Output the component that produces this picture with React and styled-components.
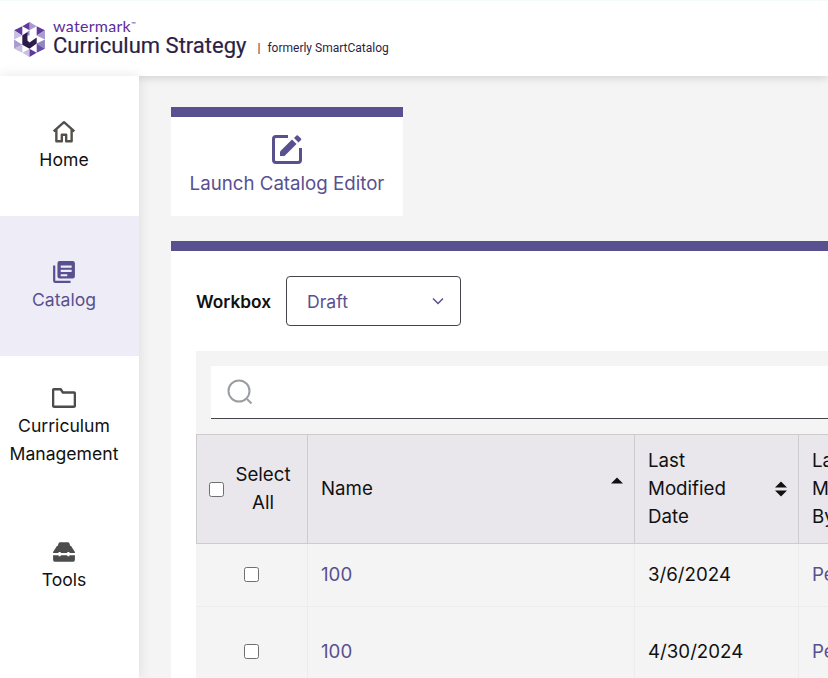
import React from "react";
import styled, { createGlobalStyle } from "styled-components";

const purple = "#58508f";

const rows = [
  { name: "100", date: "3/6/2024", by: "Peter" },
  { name: "100", date: "4/30/2024", by: "Peter" },
];

function Logo() {
  return (
    <svg width="33" height="37" viewBox="0 0 32 36">
      <polygon points="16,1 16,9 23,5" fill="#a99bd0" />
      <polygon points="9,5 16,1 16,9" fill="#5f3a9c" />
      <polygon points="23,5 31,9 23,14" fill="#5f3a9c" />
      <polygon points="1,9 9,5 9,14" fill="#5f3a9c" />
      <polygon points="1,9 9,14 1,18" fill="#c9bfe3" />
      <polygon points="23,14 31,9 31,18" fill="#a99bd0" />
      <polygon points="1,18 9,23 1,27" fill="#a99bd0" />
      <polygon points="31,18 31,27 23,22" fill="#8f86c4" />
      <polygon points="1,27 9,23 9,31" fill="#c9bfe3" />
      <polygon points="31,27 23,31 23,22" fill="#6a4ca8" />
      <polygon points="9,31 16,27 16,35" fill="#c9bfe3" />
      <polygon points="16,27 23,31 16,35" fill="#5f3a9c" />
      <polygon points="9,14 16,9 16,14" fill="#8f86c4" />
      <polygon points="9,14 14,11 14,19 16,21 23,16 23,22 16,27 9,23" fill="#2c1c4a" />
    </svg>
  );
}

function HomeIcon() {
  return (
    <svg width="24" height="24" viewBox="1 1 22 22" fill="none" stroke="#54504a" strokeWidth="2.200" strokeLinejoin="round">
      <path d="M2.500 11.500 12 3l9.500 8.500M5 9.500V20.500h5v-6h4v6h5V9.500" />
    </svg>
  );
}

function CatalogIcon() {
  return (
    <svg width="24" height="24" viewBox="1 1 22 22" fill={purple}>
      <path d="M2 6h2v14h14v2H4a2 2 0 0 1-2-2z" />
      <path d="M8 2h12a2 2 0 0 1 2 2v12a2 2 0 0 1-2 2H8a2 2 0 0 1-2-2V4a2 2 0 0 1 2-2zm1 4v2h10V6zm0 4v2h10v-2zm0 4v2h6v-2z" fillRule="evenodd" />
    </svg>
  );
}

function FolderIcon() {
  return (
    <svg width="24" height="24" viewBox="1 1 22 22" fill="none" stroke="#4c4c4c" strokeWidth="2.200" strokeLinejoin="round">
      <path d="M2 7V5a1 1 0 0 1 1-1h6l2 3h10a1 1 0 0 1 1 1v11a1 1 0 0 1-1 1H3a1 1 0 0 1-1-1z" />
    </svg>
  );
}

function ToolsIcon() {
  return (
    <svg width="24" height="24" viewBox="1 1 22 22" fill="#4c4c4c">
      <path d="M8.500 3h7a1.500 1.500 0 0 1 1.400 1L18 7H6l1.100-3A1.500 1.500 0 0 1 8.500 3z" />
      <path d="M5.500 6.500h13L22 12v1h-5v-1h-2v1H9v-1H7v1H2v-1z" />
      <path d="M2 15h5v1h2v-1h6v1h2v-1h5v4a2 2 0 0 1-2 2H4a2 2 0 0 1-2-2z" />
    </svg>
  );
}

function EditIcon() {
  return (
    <svg width="32" height="32" viewBox="0 0 32 32" fill="none">
      <path d="M17 3.500H5A2.500 2.500 0 0 0 2.500 6v21A2.500 2.500 0 0 0 5 29.500h22a2.500 2.500 0 0 0 2.500-2.500V15" stroke={purple} strokeWidth="3" />
      <path d="M9 23v-4.500L21 6.500l4.500 4.500L13.500 23z" fill={purple} />
      <path d="M23 5l2.500-2.500a1 1 0 0 1 1.400 0l3.100 3.100a1 1 0 0 1 0 1.400L27.500 9.500z" fill={purple} />
    </svg>
  );
}

function SearchIcon() {
  return (
    <svg width="26" height="26" viewBox="0 0 26 26" fill="none" stroke="#9a9ea3" strokeWidth="2">
      <circle cx="12" cy="12" r="10.500" />
      <path d="M20 20l4.500 4.500" />
    </svg>
  );
}

function Chevron() {
  return (
    <svg width="12" height="8" viewBox="0 0 12 8" fill="none" stroke={purple} strokeWidth="1.500">
      <path d="M1 1.500l5 5 5-5" />
    </svg>
  );
}

function SortIcon({ both }) {
  return (
    <svg width="12" height="18" viewBox="0 0 12 18" fill="#111">
      <path d="M6 1.500l6 6H0z" />
      {both && <path d="M6 16.500l6-6H0z" />}
    </svg>
  );
}

export default function App() {
  return (
    <>
      <GlobalStyle />
      <Page>
        <Header>
          <Logo />
          <Brand>
            <Watermark>
              watermark<Tm>™</Tm>
            </Watermark>
            <Product>Curriculum Strategy</Product>
          </Brand>
          <Formerly>
            <Pipe>|</Pipe>formerly SmartCatalog
          </Formerly>
        </Header>
        <Body>
          <Sidebar>
            <NavItem>
              <HomeIcon />
              <NavLabel>Home</NavLabel>
            </NavItem>
            <NavItem $active>
              <CatalogIcon />
              <NavLabel $active>Catalog</NavLabel>
            </NavItem>
            <NavItem>
              <FolderIcon />
              <NavLabel>
                Curriculum
                <br />
                Management
              </NavLabel>
            </NavItem>
            <NavItem>
              <ToolsIcon />
              <NavLabel>Tools</NavLabel>
            </NavItem>
          </Sidebar>
          <Main>
            <LaunchCard>
              <EditIcon />
              <LaunchLabel>Launch Catalog Editor</LaunchLabel>
            </LaunchCard>
            <Panel>
              <WorkboxRow>
                <WorkboxLabel>Workbox</WorkboxLabel>
                <Select>
                  Draft
                  <Chevron />
                </Select>
              </WorkboxRow>
              <TableArea>
                <SearchBar>
                  <SearchIcon />
                </SearchBar>
                <Table>
                  <HeadCell>
                    <Check />
                    <SelectAll>Select All</SelectAll>
                  </HeadCell>
                  <HeadCell $pad>
                    <span>Name</span>
                    <SortSlot>
                      <SortIcon />
                    </SortSlot>
                  </HeadCell>
                  <HeadCell $pad>
                    <HeadText>Last Modified Date</HeadText>
                    <SortSlot $both>
                      <SortIcon both />
                    </SortSlot>
                  </HeadCell>
                  <HeadCell $pad>
                    <HeadText>Last Modified By</HeadText>
                  </HeadCell>
                  {rows.map((row, i) => (
                    <React.Fragment key={i}>
                      <Cell $center $tall={i > 0}>
                        <Check />
                      </Cell>
                      <Cell $tall={i > 0}>
                        <RowLink>{row.name}</RowLink>
                      </Cell>
                      <Cell $tall={i > 0}>{row.date}</Cell>
                      <Cell $tall={i > 0}>
                        <RowLink>{row.by}</RowLink>
                      </Cell>
                    </React.Fragment>
                  ))}
                </Table>
              </TableArea>
            </Panel>
          </Main>
        </Body>
      </Page>
    </>
  );
}

const GlobalStyle = createGlobalStyle`
  html, body {
    margin: 0;
    height: 100%;
    overflow: hidden;
    font-family: Inter, "Liberation Sans", sans-serif;
    color: #111;
  }
`;

const Page = styled.div`
  width: 828px;
  height: 678px;
  overflow: hidden;
  background: #f4f4f4;
  display: flex;
  flex-direction: column;
`;

const Header = styled.header`
  height: 76px;
  flex: none;
  background: #fff;
  display: flex;
  align-items: center;
  padding: 1px 0 0 13px;
  box-sizing: border-box;
  border-top: 1px solid #f3fbfa;
  box-shadow: 0 2px 8px rgba(0, 0, 0, 0.14);
  position: relative;
  z-index: 1;
`;

const Brand = styled.div`
  display: flex;
  flex-direction: column;
  margin-left: 7px;
  padding-bottom: 3px;
`;

const Watermark = styled.div`
  font-family: Lato, sans-serif;
  font-size: 16px;
  line-height: 13px;
  margin-bottom: 1px;
  color: #5b2d9e;
  letter-spacing: 0.3px;
`;

const Tm = styled.span`
  font-size: 6px;
  vertical-align: 6px;
`;

const Product = styled.div`
  font-family: Roboto, sans-serif;
  font-size: 22px;
  line-height: 25px;
  color: #2c1f45;
  -webkit-text-stroke: 0.2px #2c1f45;
`;

const Formerly = styled.div`
  font-family: Roboto, sans-serif;
  font-size: 12px;
  color: #2c1f45;
  margin: 17px 0 0 11px;
`;

const Pipe = styled.span`
  margin-right: 7px;
`;

const Body = styled.div`
  flex: 1;
  display: flex;
  min-height: 0;
`;

const Sidebar = styled.nav`
  width: 139px;
  flex: none;
  background: #fff;
  box-shadow: 0 0 12px rgba(0, 0, 0, 0.1);
  position: relative;
  z-index: 2;
`;

const NavItem = styled.a`
  height: 140px;
  box-sizing: border-box;
  padding: 2px 11px 0 0;
  display: flex;
  flex-direction: column;
  align-items: center;
  justify-content: center;
  background: ${(p) => (p.$active ? "#eeecf6" : "transparent")};
`;

const NavLabel = styled.span`
  font-size: 17.600px;
  line-height: 28px;
  margin-top: 2px;
  text-align: center;
  color: ${(p) => (p.$active ? purple : "#111")};
`;

const Main = styled.main`
  flex: 1;
  min-width: 0;
  padding: 31px 0 0 32px;
`;

const LaunchCard = styled.div`
  width: 232px;
  height: 109px;
  box-sizing: border-box;
  background: #fff;
  border-top: 10px solid ${purple};
  display: flex;
  flex-direction: column;
  align-items: center;
  padding-top: 16px;
`;

const LaunchLabel = styled.span`
  font-size: 18.700px;
  line-height: 28px;
  color: ${purple};
  margin-top: 5px;
`;

const Panel = styled.section`
  margin-top: 25px;
  background: #fff;
  border-top: 10px solid ${purple};
  padding: 25px 0 0 25px;
  height: 500px;
  box-sizing: border-box;
`;

const WorkboxRow = styled.div`
  display: flex;
  align-items: center;
  gap: 15px;
`;

const WorkboxLabel = styled.span`
  font-size: 17.300px;
  font-weight: 600;
`;

const Select = styled.div`
  width: 175px;
  height: 50px;
  box-sizing: border-box;
  border: 1px solid #44444a;
  border-radius: 4px;
  padding: 0 16px 0 20px;
  display: flex;
  align-items: center;
  justify-content: space-between;
  font-size: 17.600px;
  color: ${purple};
`;

const TableArea = styled.div`
  margin-top: 25px;
  background: #f4f4f4;
  padding-top: 15px;
`;

const SearchBar = styled.div`
  margin-left: 15px;
  height: 53px;
  box-sizing: border-box;
  background: #fff;
  border-bottom: 1px solid #44444a;
  display: flex;
  align-items: center;
  padding-left: 16px;
`;

const Table = styled.div`
  margin-top: 15px;
  display: grid;
  grid-template-columns: 112px 327px 164px 200px;
  font-size: 18.700px;
`;

const HeadCell = styled.div`
  height: 110px;
  box-sizing: border-box;
  background: #e9e7ec;
  border: 1px solid #ccc;
  border-left-width: 0;
  &:first-child {
    border-left-width: 1px;
  }
  display: flex;
  align-items: center;
  justify-content: space-between;
  padding: ${(p) => (p.$pad ? "0 11px 0 13px" : "0 14px 0 12px")};
  line-height: 28px;
`;

const HeadText = styled.span`
  width: 90px;
`;

const SelectAll = styled.span`
  width: 60px;
  text-align: center;
`;

const SortSlot = styled.span`
  display: flex;
  margin-top: ${(p) => (p.$both ? "0" : "-8px")};
`;

const Check = styled.span`
  display: block;
  flex: none;
  width: 13px;
  height: 13px;
  background: #fff;
  border: 1px solid #6f6f6f;
  border-radius: 2.500px;
`;

const Cell = styled.div`
  height: ${(p) => (p.$tall ? "89px" : "63px")};
  box-sizing: border-box;
  border-right: 1px solid #ececec;
  border-bottom: 1px solid #ececec;
  display: flex;
  align-items: center;
  justify-content: ${(p) => (p.$center ? "center" : "flex-start")};
  padding: 0 0 ${(p) => (p.$tall ? "0" : "2px")} ${(p) => (p.$center ? "0" : "13px")};
`;

const RowLink = styled.a`
  color: ${purple};
`;
